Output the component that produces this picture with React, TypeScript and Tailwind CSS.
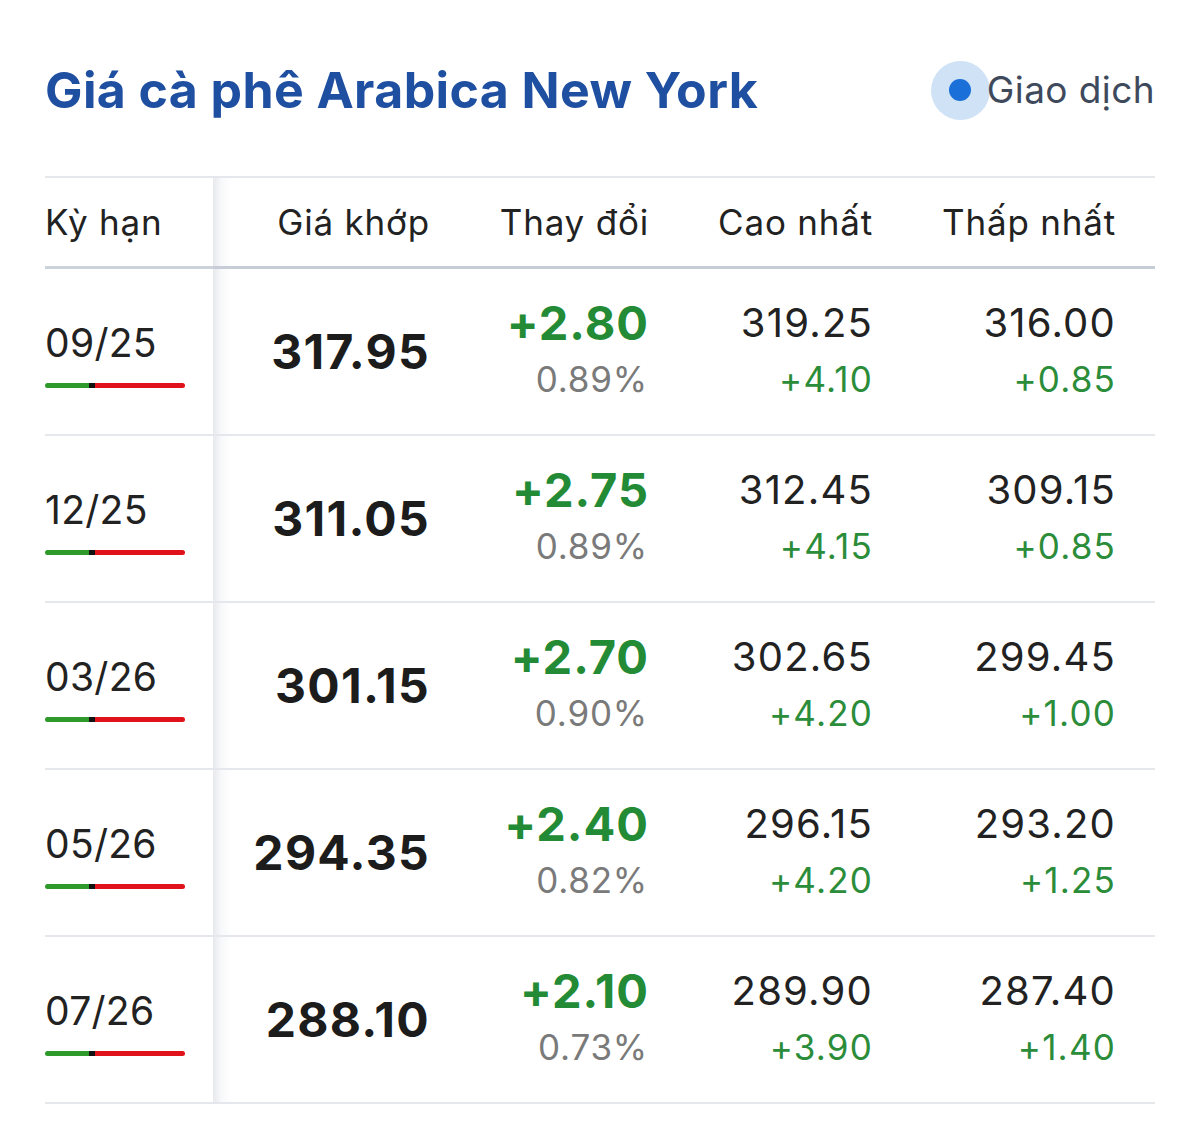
import React from "react";

type Row = {
  term: string;
  price: string;
  change: string;
  pct: string;
  high: string;
  highChg: string;
  low: string;
  lowChg: string;
};

const rows: Row[] = [
  { term: "09/25", price: "317.95", change: "+2.80", pct: "0.89%", high: "319.25", highChg: "+4.10", low: "316.00", lowChg: "+0.85" },
  { term: "12/25", price: "311.05", change: "+2.75", pct: "0.89%", high: "312.45", highChg: "+4.15", low: "309.15", lowChg: "+0.85" },
  { term: "03/26", price: "301.15", change: "+2.70", pct: "0.90%", high: "302.65", highChg: "+4.20", low: "299.45", lowChg: "+1.00" },
  { term: "05/26", price: "294.35", change: "+2.40", pct: "0.82%", high: "296.15", highChg: "+4.20", low: "293.20", lowChg: "+1.25" },
  { term: "07/26", price: "288.10", change: "+2.10", pct: "0.73%", high: "289.90", highChg: "+3.90", low: "287.40", lowChg: "+1.40" },
];

const cols = "grid grid-cols-[168px_227px_219px_224px_1fr]";

// shadow on the left edge of the scrolling part of the table
const shade = "bg-[linear-gradient(to_right,#e6e8ec_0px,#f7f8fa_8px,#ffffff_18px)]";

const App = (): JSX.Element => {
  return (
    <div className="min-h-[1132px] bg-white px-[45px] font-['Inter','Liberation_Sans',sans-serif]">
      <div className="flex h-[176px] items-center justify-between pt-[4px]">
        <h1 className="text-[50px] font-bold tracking-[0.4px] text-[#1f4fa0]">
          Giá cà phê Arabica New York
        </h1>
        <div className="flex items-center">
          <div className="flex h-[59px] w-[59px] items-center justify-center rounded-full bg-[#cfe2f6]">
            <div className="h-[22px] w-[22px] rounded-full bg-[#1a6fd8]" />
          </div>
          <span className="-ml-[3px] text-[37px] tracking-[0.4px] text-[#3e4a5c]">Giao dịch</span>
        </div>
      </div>

      <div className="border-t-2 border-[#e4e7eb]">
        {/* header */}
        <div className={`${cols} h-[91px] text-[35px] tracking-[0.8px] text-[#222]`}>
          <div className="flex items-center border-b-[3px] border-[#cdd3db]">Kỳ hạn</div>
          <div className={`${shade} col-span-4 grid grid-cols-[227px_219px_224px_1fr] border-b-[3px] border-[#c6cdd6]`}>
            <div className="flex items-center justify-end pr-[10px]">Giá khớp</div>
            <div className="flex items-center justify-end pr-[10px]">Thay đổi</div>
            <div className="flex items-center justify-end pr-[10px]">Cao nhất</div>
            <div className="flex items-center justify-end pr-[39px]">Thấp nhất</div>
          </div>
        </div>

        {rows.map((r) => (
          <div key={r.term} className={`${cols} h-[167px]`}>
            <div className="border-b-2 border-[#e4e7eb] pt-[52px]">
              <div className="text-[39px] leading-[44px] tracking-[0.3px] text-[#222]">{r.term}</div>
              <div className="mt-[18px] flex h-[5px] w-[140px]">
                <div className="h-full w-[44px] rounded-l-full bg-[#2f9a2c]" />
                <div className="h-full w-[6px] bg-[#111]" />
                <div className="h-full flex-1 rounded-r-full bg-[#e0131c]" />
              </div>
            </div>
            <div className={`${shade} col-span-4 grid grid-cols-[227px_219px_224px_1fr] border-b-2 border-[#e4e7eb]`}>
              <div className="flex items-center justify-end pr-[10px] text-[48px] font-bold tracking-[1.3px] text-[#1c1c1c]">
                {r.price}
              </div>
              <div className="flex flex-col items-end pr-[10px] pt-[28px]">
                <span className="text-[47px] font-bold leading-[52px] tracking-[1px] text-[#238b35]">{r.change}</span>
                <span className="mt-[10px] pr-[1px] text-[35px] leading-[40px] tracking-[0.8px] text-[#7a7a7a]">{r.pct}</span>
              </div>
              <div className="flex flex-col items-end pr-[10px] pt-[28px]">
                <span className="text-[40px] leading-[52px] tracking-[1.2px] text-[#222]">{r.high}</span>
                <span className="mt-[10px] text-[35px] leading-[40px] tracking-[1.2px] text-[#2b8c3a]">{r.highChg}</span>
              </div>
              <div className="flex flex-col items-end pr-[39px] pt-[28px]">
                <span className="text-[40px] leading-[52px] tracking-[1.2px] text-[#222]">{r.low}</span>
                <span className="mt-[10px] text-[35px] leading-[40px] tracking-[1.2px] text-[#2b8c3a]">{r.lowChg}</span>
              </div>
            </div>
          </div>
        ))}
      </div>
    </div>
  );
};

export default App;
